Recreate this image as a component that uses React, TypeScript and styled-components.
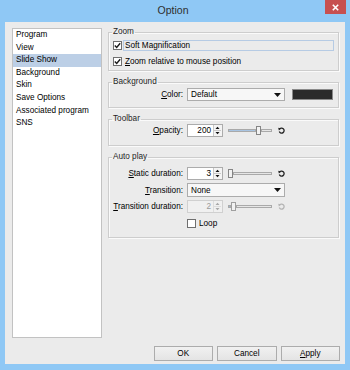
import styled, { createGlobalStyle } from "styled-components";

const Global = createGlobalStyle`
  html, body { margin: 0; padding: 0; background: #8fc8f5; }
  body {
    font-family: "Liberation Sans", Arial, sans-serif;
    font-size: 8.2px;
    color: #000;
  }
`;

const Window = styled.div`
  width: 350px;
  height: 370px;
  box-sizing: border-box;
  background: #8fc8f5;
  display: flex;
  flex-direction: column;
  padding: 0 5px 6px 5px;
`;

const TitleBar = styled.div`
  height: 22px;
  margin: 0 -5px;
  padding-right: 4px;
  display: grid;
  grid-template-columns: 1fr auto 1fr;
  align-items: start;
`;

const Title = styled.div`
  grid-column: 2;
  align-self: center;
  padding-bottom: 2px;
  font-size: 10.5px;
  color: #2e2e2e;
`;

const CloseButton = styled.div`
  grid-column: 3;
  justify-self: end;
  width: 21px;
  height: 14px;
  background: #c75050;
  display: flex;
  align-items: center;
  justify-content: center;
`;

const Client = styled.div`
  flex: 1;
  display: flex;
  flex-direction: column;
  background: #ebebeb;
  padding: 5px 5px 3px 7px;
  box-sizing: border-box;
`;

const Body = styled.div`
  flex: 1;
  display: flex;
  gap: 6px;
`;

const List = styled.ul`
  width: 90px;
  box-sizing: border-box;
  margin: 1px 0 0;
  padding: 0;
  list-style: none;
  background: #fff;
  border: 1px solid #c2c2c2;
`;

const ListItem = styled.li<{ $selected?: boolean }>`
  height: 12.6px;
  line-height: 12.6px;
  padding-left: 3px;
  white-space: nowrap;
  background: ${p => (p.$selected ? "#bccfe6" : "transparent")};
`;

const Panel = styled.div`
  flex: 1;
  margin-right: 1px;
  display: flex;
  flex-direction: column;
`;

const Group = styled.fieldset<{ $pt: number; $pb: number; $gap: number }>`
  margin: 0 0 6px;
  min-width: 0;
  padding: ${p => p.$pt}px 4px ${p => p.$pb}px;
  border: 1px solid #cdcdcd;
  box-shadow: inset 1px 1px 0 #fafafa, 1px 1px 0 #fafafa;
  display: flex;
  flex-direction: column;
  gap: ${p => p.$gap}px;
`;

const Legend = styled.legend`
  height: 10px;
  line-height: 10px;
  padding: 0 1px;
  margin-left: -1px;
  color: #1e1e1e;
`;

const CheckRow = styled.div`
  height: 12px;
  display: flex;
  align-items: center;
  gap: 1px;
`;

const Box = styled.span`
  width: 9px;
  height: 9px;
  box-sizing: border-box;
  border: 1px solid #6f6f6f;
  background: #fff;
  display: flex;
  align-items: center;
  justify-content: center;
  flex: none;
`;

const CheckLabel = styled.span<{ $focus?: boolean }>`
  flex: ${p => (p.$focus ? 1 : "none")};
  height: 11px;
  line-height: 9px;
  box-sizing: border-box;
  padding: 0 1px;
  border: 1px solid ${p => (p.$focus ? "#b6cbe4" : "transparent")};
`;

const Row = styled.div<{ $h: number }>`
  height: ${p => p.$h}px;
  display: grid;
  grid-template-columns: 70px 1fr;
  column-gap: 4px;
  align-items: center;
`;

const Label = styled.span`
  text-align: right;
  white-space: nowrap;
`;

const Key = styled.span`
  text-decoration: underline;
`;

const Controls = styled.div`
  display: flex;
  align-items: center;
  height: 100%;
`;

const Combo = styled.div`
  width: 98px;
  height: 100%;
  box-sizing: border-box;
  border: 1px solid #acacac;
  background: #f7f7f7;
  display: flex;
  align-items: center;
  justify-content: space-between;
  padding: 0 3px 0 3px;
`;

const Swatch = styled.div`
  width: 41px;
  height: 11px;
  margin-left: 7px;
  box-sizing: border-box;
  border: 1px solid #8a8a8a;
  background: #2b2b2b;
`;

const Spin = styled.div<{ $disabled?: boolean }>`
  width: 36px;
  height: 13px;
  box-sizing: border-box;
  border: 1px solid ${p => (p.$disabled ? "#d0d0d0" : "#acacac")};
  background: ${p => (p.$disabled ? "#f0f0f0" : "#fff")};
  color: ${p => (p.$disabled ? "#9a9a9a" : "#000")};
  display: flex;
`;

const SpinValue = styled.span`
  flex: 1;
  text-align: right;
  line-height: 11px;
  padding-right: 2px;
`;

const SpinButtons = styled.div<{ $disabled?: boolean }>`
  width: 8px;
  border-left: 1px solid ${p => (p.$disabled ? "#dcdcdc" : "#c8c8c8")};
  background: ${p => (p.$disabled ? "#f0f0f0" : "#f4f4f4")};
  display: flex;
`;

const Slider = styled.div`
  width: 44px;
  height: 9px;
  margin-left: 5px;
  display: flex;
  align-items: center;
`;

const Track = styled.div<{ $fill?: string; $grow?: boolean }>`
  height: 3px;
  box-sizing: border-box;
  border: 1px solid #a9a9a9;
  background: ${p => p.$fill || "#e6e6e6"};
  flex: ${p => (p.$grow ? 1 : "none")};
`;

const Thumb = styled.div<{ $disabled?: boolean }>`
  width: 5px;
  height: 9px;
  box-sizing: border-box;
  border: 1px solid ${p => (p.$disabled ? "#9f9f9f" : "#858585")};
  background: #f2f2f2;
  flex: none;
`;

const Reset = styled.span`
  margin-left: 6px;
  display: flex;
`;

const Footer = styled.div`
  margin-top: 8px;
  display: flex;
  justify-content: flex-end;
  gap: 4px;
`;

const Button = styled.div`
  width: 59.5px;
  height: 15px;
  box-sizing: border-box;
  border: 1px solid #acacac;
  background: linear-gradient(#f1f1f1, #e4e4e4);
  display: flex;
  align-items: center;
  justify-content: center;
`;

const pages = ["Program", "View", "Slide Show", "Background", "Skin", "Save Options", "Associated program", "SNS"];

const Check = () => (
  <svg width="7" height="7" viewBox="0 0 7 7">
    <path d="M0.8 3.4 L2.7 5.4 L6.2 1.2" stroke="#1a1a1a" strokeWidth="1.4" fill="none" />
  </svg>
);

const Arrow = () => (
  <svg width="7" height="4" viewBox="0 0 7 4">
    <path d="M0 0 H7 L3.5 4 Z" fill="#111" />
  </svg>
);

const SpinArrows = ({ disabled }: { disabled?: boolean }) => {
  const c = disabled ? "#a8a8a8" : "#111";
  return (
    <svg width="7" height="11" viewBox="0 0 7 11">
      <path d="M1.5 4 L3.5 1.8 L5.5 4 Z" fill={c} />
      <line x1="0" y1="5.5" x2="7" y2="5.5" stroke={disabled ? "#dcdcdc" : "#c8c8c8"} strokeWidth="1" />
      <path d="M1.5 7 L5.5 7 L3.5 9.2 Z" fill={c} />
    </svg>
  );
};

const ResetIcon = ({ disabled }: { disabled?: boolean }) => {
  const c = disabled ? "#b4b4b4" : "#222";
  return (
    <svg width="7" height="7" viewBox="0 0 7 7">
      <path d="M1.4 2.4 A2.5 2.5 0 1 1 1.3 4.6" stroke={c} strokeWidth="1.3" fill="none" />
      <path d="M0.2 0.8 L3 1.6 L0.9 3.6 Z" fill={c} />
    </svg>
  );
};

function SpinSlider({ value, fill, disabled }: { value: string; fill: number; disabled?: boolean }) {
  return (
    <Controls>
      <Spin $disabled={disabled}>
        <SpinValue>{value}</SpinValue>
        <SpinButtons $disabled={disabled}>
          <SpinArrows disabled={disabled} />
        </SpinButtons>
      </Spin>
      <Slider>
        {fill > 0 && <Track $fill={disabled ? "#9fb4c9" : "#a8c4e2"} style={{ width: fill }} />}
        <Thumb $disabled={disabled} />
        <Track $grow />
      </Slider>
      <Reset>
        <ResetIcon disabled={disabled} />
      </Reset>
    </Controls>
  );
}

export default function App() {
  return (
    <>
      <Global />
      <Window>
        <TitleBar>
          <Title>Option</Title>
          <CloseButton>
            <svg width="7" height="7" viewBox="0 0 7 7">
              <path d="M0.8 0.8 L6.2 6.2 M6.2 0.8 L0.8 6.2" stroke="#fff" strokeWidth="1.6" />
            </svg>
          </CloseButton>
        </TitleBar>
        <Client>
          <Body>
            <List>
              {pages.map(p => (
                <ListItem key={p} $selected={p === "Slide Show"}>
                  {p}
                </ListItem>
              ))}
            </List>
            <Panel>
              <Group $pt={2} $pb={3} $gap={4}>
                <Legend>Zoom</Legend>
                <CheckRow>
                  <Box>
                    <Check />
                  </Box>
                  <CheckLabel $focus>Soft Magnification</CheckLabel>
                </CheckRow>
                <CheckRow>
                  <Box>
                    <Check />
                  </Box>
                  <CheckLabel>
                    <Key>Z</Key>oom relative to mouse position
                  </CheckLabel>
                </CheckRow>
              </Group>

              <Group $pt={1} $pb={6} $gap={0}>
                <Legend>Background</Legend>
                <Row $h={13}>
                  <Label>
                    <Key>C</Key>olor:
                  </Label>
                  <Controls>
                    <Combo>
                      <span>Default</span>
                      <Arrow />
                    </Combo>
                    <Swatch />
                  </Controls>
                </Row>
              </Group>

              <Group $pt={0} $pb={8} $gap={0}>
                <Legend>Toolbar</Legend>
                <Row $h={13}>
                  <Label>
                    <Key>O</Key>pacity:
                  </Label>
                  <SpinSlider value="200" fill={28} />
                </Row>
              </Group>

              <Group $pt={5} $pb={7} $gap={3}>
                <Legend>Auto play</Legend>
                <Row $h={13}>
                  <Label>
                    <Key>S</Key>tatic duration:
                  </Label>
                  <SpinSlider value="3" fill={0} />
                </Row>
                <Row $h={14}>
                  <Label>
                    <Key>T</Key>ransition:
                  </Label>
                  <Controls>
                    <Combo>
                      <span>None</span>
                      <Arrow />
                    </Combo>
                  </Controls>
                </Row>
                <Row $h={13}>
                  <Label>
                    <Key>T</Key>ransition duration:
                  </Label>
                  <SpinSlider value="2" fill={3} disabled />
                </Row>
                <Row $h={13} style={{ marginTop: 1 }}>
                  <span />
                  <CheckRow>
                    <Box />
                    <CheckLabel>Loop</CheckLabel>
                  </CheckRow>
                </Row>
              </Group>
            </Panel>
          </Body>
          <Footer>
            <Button>OK</Button>
            <Button>Cancel</Button>
            <Button>
              <span>
                <Key>A</Key>pply
              </span>
            </Button>
          </Footer>
        </Client>
      </Window>
    </>
  );
}
